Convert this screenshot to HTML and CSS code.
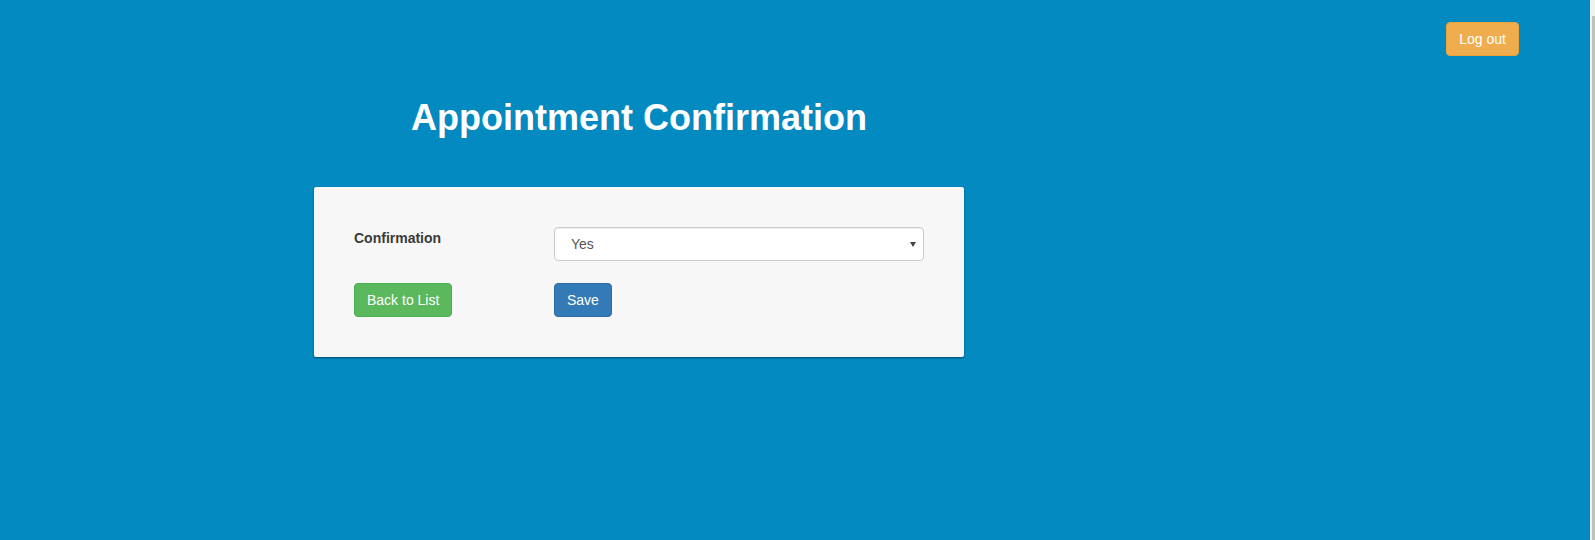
FILE: index.html
```html
<!DOCTYPE html>
<html lang="en">
<head>
<meta charset="utf-8">
<title>Appointment Confirmation</title>
<link rel="stylesheet" href="styles.css">
</head>
<body>
  <header class="topbar">
    <button class="btn btn-warning" type="button">Log out</button>
  </header>
  <main class="page">
    <h1 class="title">Appointment Confirmation</h1>
    <form class="card">
      <div class="row">
        <label class="label" for="confirm">Confirmation</label>
        <div class="select-wrap">
          <select id="confirm" class="select">
            <option>Yes</option>
            <option>No</option>
          </select>
          <span class="caret"></span>
        </div>
      </div>
      <div class="row row-actions">
        <div><button class="btn btn-success" type="button">Back to List</button></div>
        <div><button class="btn btn-primary" type="submit">Save</button></div>
      </div>
    </form>
  </main>
  <div class="scrollbar"><div class="scrollbar-thumb"></div></div>
</body>
</html>
```

FILE: styles.css
```css
* {
  box-sizing: border-box;
}

html, body {
  height: 100%;
}

body {
  margin: 0;
  padding-top: 22px;
  background: #038ac0;
  font-family: "Liberation Sans", Arial, Helvetica, sans-serif;
  font-size: 14px;
  line-height: 20px;
  color: #333;
  overflow: hidden;
}

.topbar {
  display: flex;
  justify-content: flex-end;
  padding-right: 76px;
}

.page {
  width: 650px;
  margin-left: 314px;
}

.title {
  margin: 42px 0 49px;
  font-size: 36px;
  line-height: 40px;
  font-weight: 700;
  color: #fff;
  text-align: center;
}

.card {
  margin: 0;
  padding: 40px;
  background: #f7f7f7;
  border-radius: 2px;
  box-shadow: 0 1px 2px rgba(0, 0, 0, 0.45);
}

.row {
  display: grid;
  grid-template-columns: 200px 1fr;
}

.row-actions {
  margin-top: 22px;
}

.label {
  padding-top: 1px;
  font-size: 14px;
  font-weight: 700;
  color: #3a3a3a;
}

.select-wrap {
  position: relative;
}

.select {
  display: block;
  width: 100%;
  height: 34px;
  margin: 0;
  padding: 6px 12px 6px 16px;
  font-family: inherit;
  font-size: 14px;
  line-height: 20px;
  color: #555;
  background: #fff;
  border: 1px solid #ccc;
  border-radius: 4px;
  box-shadow: inset 0 1px 1px rgba(0, 0, 0, 0.075);
  appearance: none;
  -webkit-appearance: none;
  outline: none;
}

.caret {
  position: absolute;
  right: 8px;
  top: 15px;
  width: 0;
  height: 0;
  border-left: 3px solid transparent;
  border-right: 3px solid transparent;
  border-top: 5px solid #444;
  pointer-events: none;
}

.btn {
  display: inline-block;
  margin: 0;
  padding: 6px 12px;
  font-family: inherit;
  font-size: 14px;
  line-height: 20px;
  font-weight: 400;
  color: #fff;
  border: 1px solid transparent;
  border-radius: 4px;
  cursor: pointer;
}

.btn-warning {
  background: #f0ad4e;
  border-color: #eea236;
}

.btn-success {
  background: #5cb85c;
  border-color: #4cae4c;
}

.btn-primary {
  background: #337ab7;
  border-color: #2e6da4;
}

.scrollbar {
  position: fixed;
  top: 0;
  right: 0;
  bottom: 0;
  width: 5px;
  padding-top: 16px;
  padding-left: 2px;
  background: #f1f1f1;
}

.scrollbar-thumb {
  height: 100%;
  background: #c1c1c1;
}
```
